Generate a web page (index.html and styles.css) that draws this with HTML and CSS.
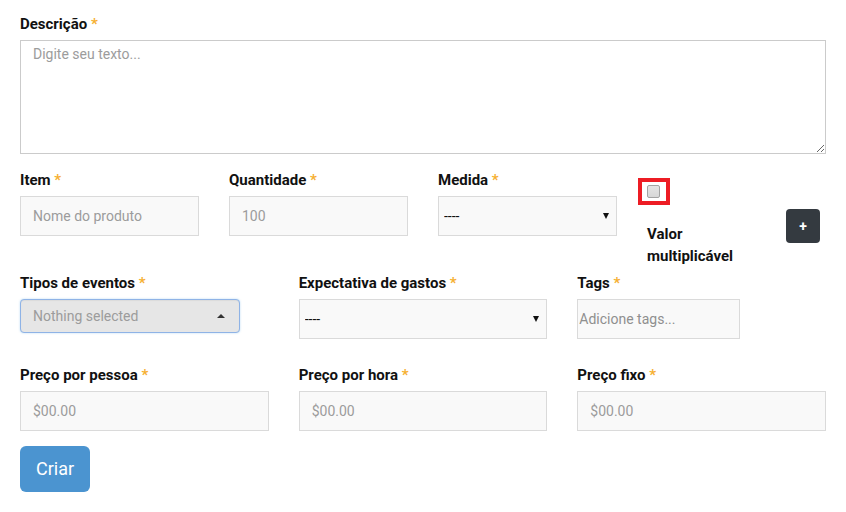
FILE: index.html
```html
<!DOCTYPE html>
<html lang="pt-BR">
<head>
<meta charset="utf-8">
<title>Formulário</title>
<link rel="stylesheet" href="styles.css">
</head>
<body>
<form class="form">
  <div class="group group-desc">
    <label class="label">Descrição <span class="req">*</span></label>
    <textarea class="textarea" placeholder="Digite seu texto..."></textarea>
  </div>

  <div class="row row-4">
    <div class="group">
      <label class="label">Item <span class="req">*</span></label>
      <input class="input" type="text" placeholder="Nome do produto">
    </div>
    <div class="group">
      <label class="label">Quantidade <span class="req">*</span></label>
      <input class="input" type="text" placeholder="100">
    </div>
    <div class="group">
      <label class="label">Medida <span class="req">*</span></label>
      <div class="select-wrap">
        <select class="select"><option>----</option></select>
      </div>
    </div>
    <div class="group group-check">
      <span class="check-box"><input class="check" type="checkbox"></span>
      <div class="check-row">
        <label class="label label-check">Valor multiplicável</label>
        <button type="button" class="btn-add">+</button>
      </div>
    </div>
  </div>

  <div class="row row-3 row-events">
    <div class="group">
      <label class="label">Tipos de eventos <span class="req">*</span></label>
      <button type="button" class="multi">
        <span class="multi-text">Nothing selected</span>
        <span class="caret-up"></span>
      </button>
    </div>
    <div class="group">
      <label class="label">Expectativa de gastos <span class="req">*</span></label>
      <div class="select-wrap">
        <select class="select"><option>----</option></select>
      </div>
    </div>
    <div class="group">
      <label class="label">Tags <span class="req">*</span></label>
      <input class="input input-tags" type="text" placeholder="Adicione tags...">
    </div>
  </div>

  <div class="row row-3 row-prices">
    <div class="group">
      <label class="label">Preço por pessoa <span class="req">*</span></label>
      <input class="input" type="text" placeholder="$00.00">
    </div>
    <div class="group">
      <label class="label">Preço por hora <span class="req">*</span></label>
      <input class="input" type="text" placeholder="$00.00">
    </div>
    <div class="group">
      <label class="label">Preço fixo <span class="req">*</span></label>
      <input class="input" type="text" placeholder="$00.00">
    </div>
  </div>

  <button type="submit" class="btn-submit">Criar</button>
</form>
</body>
</html>
```

FILE: styles.css
```css
* { box-sizing: border-box; }

html, body {
  margin: 0;
  background: #fff;
}

body {
  padding: 13px 20px 0 20px;
  font-family: Roboto, "Liberation Sans", Arial, sans-serif;
  font-size: 14px;
  line-height: 20px;
  color: #111;
}

.form {
  display: flex;
  flex-direction: column;
  align-items: flex-start;
  width: 806px;
}

.group {
  display: flex;
  flex-direction: column;
  min-width: 0;
}

.group-desc {
  width: 100%;
  margin-bottom: 15px;
}

.label {
  display: block;
  font-weight: 700;
  font-size: 15px;
  line-height: 20px;
  color: #111;
  padding-top: 1px;
  margin-bottom: 6px;
}

.req {
  color: #f6b032;
  font-weight: 700;
}

.textarea {
  display: block;
  width: 100%;
  height: 114px;
  margin: 0;
  padding: 3px 12px;
  border: 1px solid #cbcbcb;
  background: #fff;
  font-family: inherit;
  font-size: 14px;
  line-height: 20px;
  color: #333;
  resize: vertical;
  outline: none;
}

.textarea::placeholder,
.input::placeholder {
  color: #9c9c9c;
  opacity: 1;
}

.row {
  display: grid;
  column-gap: 30px;
  width: 100%;
}

.row-4 {
  grid-template-columns: repeat(4, 1fr);
  margin-bottom: 5px;
}

.row-3 {
  grid-template-columns: repeat(3, 1fr);
}

.row-events {
  margin-bottom: 25px;
  align-items: start;
}

.row-prices {
  margin-bottom: 15px;
}

.input {
  display: block;
  width: 100%;
  height: 40px;
  margin: 0;
  padding: 0 12px;
  border: 1px solid #dadada;
  border-radius: 0;
  background: #f9f9f9;
  font-family: inherit;
  font-size: 14px;
  color: #333;
  outline: none;
}

.input-tags {
  width: 163px;
  padding: 0 1px;
}

.input-tags::placeholder {
  color: #8f8f8f;
}

.select-wrap {
  position: relative;
  width: 100%;
}

.select-wrap::after {
  content: "";
  position: absolute;
  right: 8px;
  top: 17px;
  width: 0;
  height: 0;
  border-left: 3px solid transparent;
  border-right: 3px solid transparent;
  border-top: 6px solid #111;
  pointer-events: none;
}

.select {
  display: block;
  width: 100%;
  height: 40px;
  margin: 0;
  padding: 0 5px;
  border: 1px solid #dadada;
  border-radius: 0;
  background: #f9f9f9;
  font-family: inherit;
  font-size: 14px;
  color: #111;
  -webkit-appearance: none;
  appearance: none;
  outline: none;
}

/* checkbox column */
.group-check {
  align-items: stretch;
}

.check-box {
  display: inline-flex;
  align-self: flex-start;
  margin: 9px 0 0 -9px;
  width: 32px;
  height: 27px;
  border: 4px solid #ed1c24;
}

.check {
  -webkit-appearance: none;
  appearance: none;
  width: 13px;
  height: 13px;
  margin: 3px 0 0 5px;
  border: 1px solid #a3a3a3;
  border-radius: 2px;
  background: linear-gradient(#e4e4e4, #d7d7d7);
}

.check-row {
  display: flex;
  align-items: flex-start;
  justify-content: space-between;
  padding-right: 6px;
}

.label-check {
  width: 110px;
  margin: 17px 0 0 0;
  line-height: 22px;
}

.btn-add {
  width: 34px;
  height: 34px;
  margin-top: 4px;
  padding: 0;
  border: none;
  border-radius: 4px;
  background: #343a40;
  color: #fff;
  font-family: inherit;
  font-size: 14px;
  font-weight: 700;
  line-height: 34px;
  text-align: center;
}

/* bootstrap-select style button */
.multi {
  display: flex;
  align-items: center;
  justify-content: space-between;
  width: 220px;
  height: 34px;
  margin: 0;
  padding: 0 14px 0 12px;
  border: 1px solid #8fb3e6;
  border-radius: 4px;
  background: #e6e6e6;
  box-shadow: inset 0 1px 1px rgba(0,0,0,.05), 0 0 2px rgba(102,175,233,.5);
  font-family: inherit;
  font-size: 14px;
  color: #9c9c9c;
  text-align: left;
}

.caret-up {
  width: 0;
  height: 0;
  border-left: 4px solid transparent;
  border-right: 4px solid transparent;
  border-bottom: 4px solid #333;
}

.btn-submit {
  width: 70px;
  height: 46px;
  padding: 0;
  border: none;
  border-radius: 6px;
  background: #4b94d0;
  color: #fff;
  font-family: inherit;
  font-size: 18px;
  line-height: 24px;
}
```
